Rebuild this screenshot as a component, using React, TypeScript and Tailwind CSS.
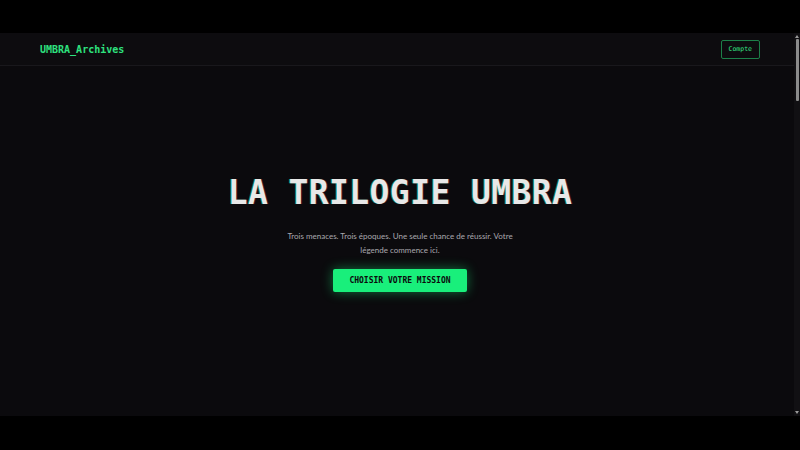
export default function App() {
  return (
    <div className="h-[450px] w-[800px] bg-black flex flex-col overflow-hidden">
      <div className="h-[33px] shrink-0" />
      <div className="h-[383px] flex">
        <main className="flex-1 bg-[#0b0a0d] flex flex-col">
          {/* Nav */}
          <nav className="h-[33px] shrink-0 bg-[#0d0c0f] border-b border-[#19181c] flex items-center justify-between pl-[40px] pr-[34px]">
            <span className="font-['DejaVu_Sans_Mono',monospace] font-bold text-[10px] text-[#2ee27f] pt-[1px]">
              UMBRA_Archives
            </span>
            <button className="h-[19px] px-[7px] border border-[#1c8049] rounded-[2px] font-['DejaVu_Sans_Mono',monospace] text-[6.5px] text-[#35e586] leading-none">
              Compte
            </button>
          </nav>

          {/* Hero */}
          <section className="flex flex-col items-center pt-[107px] pl-[6px]">
            <h1 className="font-['DejaVu_Sans_Mono',monospace] font-bold text-[33px] tracking-[0.4px] leading-[40px] text-[#e8e8e8] [text-shadow:-1px_0_rgba(0,255,136,0.45),1px_0_rgba(255,80,170,0.25)]">
              LA TRILOGIE UMBRA
            </h1>
            <p className="mt-[16px] max-w-[240px] text-center font-['Lato',sans-serif] text-[8px] leading-[14px] text-[#aaa8ad]">
              Trois menaces. Trois époques. Une seule chance de réussir. Votre légende commence ici.
            </p>
            <button className="mt-[12px] h-[23px] w-[134px] rounded-[2px] bg-[#19ef7b] font-['DejaVu_Sans_Mono',monospace] font-bold text-[8px] text-[#0b0a0d] shadow-[0_0_12px_rgba(25,239,123,0.45)]">
              CHOISIR VOTRE MISSION
            </button>
          </section>
        </main>

        {/* Scrollbar */}
        <div className="w-[6px] bg-[#111013] flex flex-col items-center pt-[2px] pb-[2px]">
          <div className="w-0 h-0 border-l-[2px] border-r-[2px] border-b-[3px] border-l-transparent border-r-transparent border-b-[#9a9a9a]" />
          <div className="mt-[1px] h-[62px] w-[3px] bg-[#8c8c8c] rounded-[1px]" />
          <div className="flex-1" />
          <div className="w-0 h-0 border-l-[2px] border-r-[2px] border-t-[3px] border-l-transparent border-r-transparent border-t-[#9a9a9a]" />
        </div>
      </div>
      <div className="flex-1" />
    </div>
  );
}
